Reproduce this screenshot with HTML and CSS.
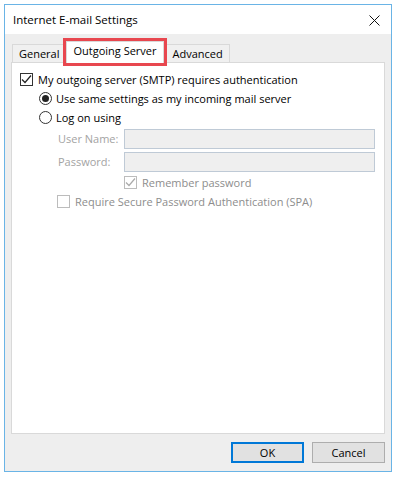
FILE: index.html
```html
<!DOCTYPE html>
<html lang="en">
<head>
    <meta charset="UTF-8">
    <title>Internet E-mail Settings</title>
    <link rel="stylesheet" href="styles.css">
</head>
<body>
    <div class="window">
        <div class="titlebar">
            <span class="title">Internet E-mail Settings</span>
            <svg class="close" width="11" height="11" viewBox="0 0 11 11">
                <path d="M0.5 0.5 L10.5 10.5 M10.5 0.5 L0.5 10.5" stroke="#111" stroke-width="1" fill="none"/>
            </svg>
        </div>

        <div class="content">
            <div class="tabs">
                <div class="tab">General</div>
                <div class="tab active">Outgoing Server</div>
                <div class="tab">Advanced</div>
            </div>

            <div class="panel">
                <div class="row">
                    <span class="check checked">
                        <svg width="11" height="11" viewBox="0 0 11 11"><path d="M1 5.5 L4 8.5 L10 1.5" stroke="#222" stroke-width="1.2" fill="none"/></svg>
                    </span>
                    <span>My outgoing server (SMTP) requires authentication</span>
                </div>

                <div class="row indent">
                    <span class="radio on"></span>
                    <span>Use same settings as my incoming mail server</span>
                </div>

                <div class="row indent">
                    <span class="radio"></span>
                    <span>Log on using</span>
                </div>

                <div class="field">
                    <label>User Name:</label>
                    <div class="input"></div>
                </div>

                <div class="field">
                    <label>Password:</label>
                    <div class="input"></div>
                </div>

                <div class="row remember disabled">
                    <span class="check dim">
                        <svg width="11" height="11" viewBox="0 0 11 11"><path d="M1 5.5 L4 8.5 L10 1.5" stroke="#aaa" stroke-width="1.2" fill="none"/></svg>
                    </span>
                    <span>Remember password</span>
                </div>

                <div class="row spa disabled">
                    <span class="check dim"></span>
                    <span>Require Secure Password Authentication (SPA)</span>
                </div>
            </div>

            <div class="buttons">
                <button class="btn default">OK</button>
                <button class="btn">Cancel</button>
            </div>
        </div>
    </div>
</body>
</html>
```

FILE: styles.css
```css
* {
    margin: 0;
    padding: 0;
    box-sizing: border-box;
}

body {
    background: #fff;
    font-family: 'Open Sans', 'Noto Sans', sans-serif;
    font-size: 11px;
    color: #000;
    padding: 4px 5px 5px 4px;
}

.window {
    width: 388px;
    height: 468px;
    border: 1px solid #6ab4e6;
    background: #eeeeee;
    display: flex;
    flex-direction: column;
}

.titlebar {
    height: 29px;
    background: #fff;
    display: flex;
    align-items: center;
    justify-content: space-between;
    padding: 0 11px 0 8px;
}

.title {
    font-size: 11.5px;
    margin-top: -1px;
}

.close {
    margin-top: 1px;
}

.content {
    flex: 1;
    display: flex;
    flex-direction: column;
    padding: 8px 6px 8px 6px;
}

.tabs {
    display: flex;
    align-items: flex-end;
    height: 20px;
    padding-left: 1px;
}

.tab {
    height: 18px;
    padding: 0 6px;
    border: 1px solid #d9d9d9;
    border-bottom: none;
    background: #f0f0f0;
    line-height: 17px;
    margin-right: -1px;
}

.tab.active {
    height: 22px;
    background: #fff;
    padding: 0 6px;
    margin: 0 2px -1px 1px;
    line-height: 18px;
    position: relative;
    z-index: 1;
    border: 1px solid #d9d9d9;
    border-bottom: none;
    outline: 3px solid #e8474f;
    outline-offset: 0;
}

.panel {
    flex: 1;
    background: #fff;
    border: 1px solid #d9d9d9;
    padding: 7px 0 0 8px;
}

.row {
    display: flex;
    align-items: center;
    height: 19px;
    gap: 5px;
}

.indent {
    padding-left: 19px;
    gap: 4px;
}

.check {
    width: 13px;
    height: 13px;
    border: 1px solid #333;
    background: #fff;
    display: flex;
    align-items: center;
    justify-content: center;
}

.check.dim {
    border-color: #bcbcbc;
}

.radio {
    width: 13px;
    height: 13px;
    border: 1px solid #333;
    border-radius: 50%;
    background: #fff;
    position: relative;
}

.radio.on::after {
    content: "";
    position: absolute;
    left: 2px;
    top: 2px;
    width: 7px;
    height: 7px;
    border-radius: 50%;
    background: #222;
}

.field {
    display: flex;
    align-items: center;
    height: 23px;
    padding-left: 38px;
    color: #a3a3a3;
}

.field label {
    width: 66px;
}

.input {
    width: 251px;
    height: 20px;
    border: 1px solid #bfcad6;
    background: #efefef;
}

.disabled {
    color: #8d8d8d;
}

.remember {
    padding-left: 104px;
}

.spa {
    padding-left: 37px;
}

.buttons {
    display: flex;
    justify-content: flex-end;
    gap: 8px;
    padding-top: 8px;
}

.btn {
    width: 73px;
    height: 21px;
    border: 1px solid #adadad;
    background: #e1e1e1;
    font-family: inherit;
    font-size: 11px;
    color: #000;
}

.btn.default {
    border: 2px solid #0078d7;
}
```
